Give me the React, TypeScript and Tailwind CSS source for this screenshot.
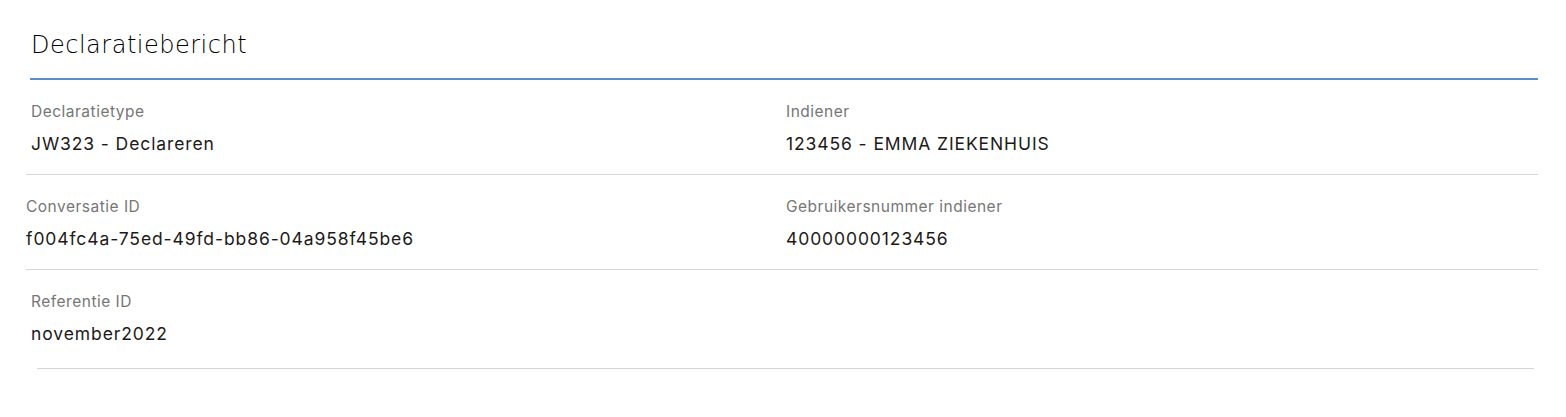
import React from "react";

const Field = ({ label, value, className = "" }: { label: string; value: string; className?: string }) => (
  <div className={`flex flex-col ${className}`}>
    <div className="text-[15.5px] leading-[20px] tracking-[0.5px] text-[#767676]">{label}</div>
    <div className="mt-[10px] text-[17.5px] leading-[24px] tracking-[0.9px] text-[#1c1a1a]">{value}</div>
  </div>
);

export default function App() {
  return (
    <div className="w-[1566px] h-[417px] bg-white" style={{ fontFamily: 'Inter, "Noto Sans", sans-serif' }}>
      <div className="pl-[30px] pr-[28px] pt-[29px]">
        <h1
          className="pl-[1px] text-[24px] leading-[32px] font-light text-[#000000] tracking-[0.5px]"
          style={{ fontFamily: '"DejaVu Sans", sans-serif' }}
        >
          Declaratiebericht
        </h1>
        <div className="mt-[17px] h-[2px] bg-[#5b8ec6]" />
      </div>
      <div className="pl-[26px] pr-[28px]">
        <div className="grid grid-cols-[760px_1fr] pt-[22px] pb-[18px] border-b border-[#d6d6d6]">
          <Field className="pl-[5px]" label="Declaratietype" value="JW323 - Declareren" />
          <Field label="Indiener" value="123456 - EMMA ZIEKENHUIS" />
        </div>
        <div className="grid grid-cols-[760px_1fr] pt-[22px] pb-[18px] border-b border-[#d6d6d6]">
          <Field label="Conversatie ID" value="f004fc4a-75ed-49fd-bb86-04a958f45be6" />
          <Field label="Gebruikersnummer indiener" value="40000000123456" />
        </div>
      </div>
      <div className="pl-[31px] pr-[32px]">
        <div className="pt-[22px] pb-[22px]">
          <Field label="Referentie ID" value="november2022" />
        </div>
        <div className="ml-[6px] h-px bg-[#d6d6d6]" />
      </div>
    </div>
  );
}
